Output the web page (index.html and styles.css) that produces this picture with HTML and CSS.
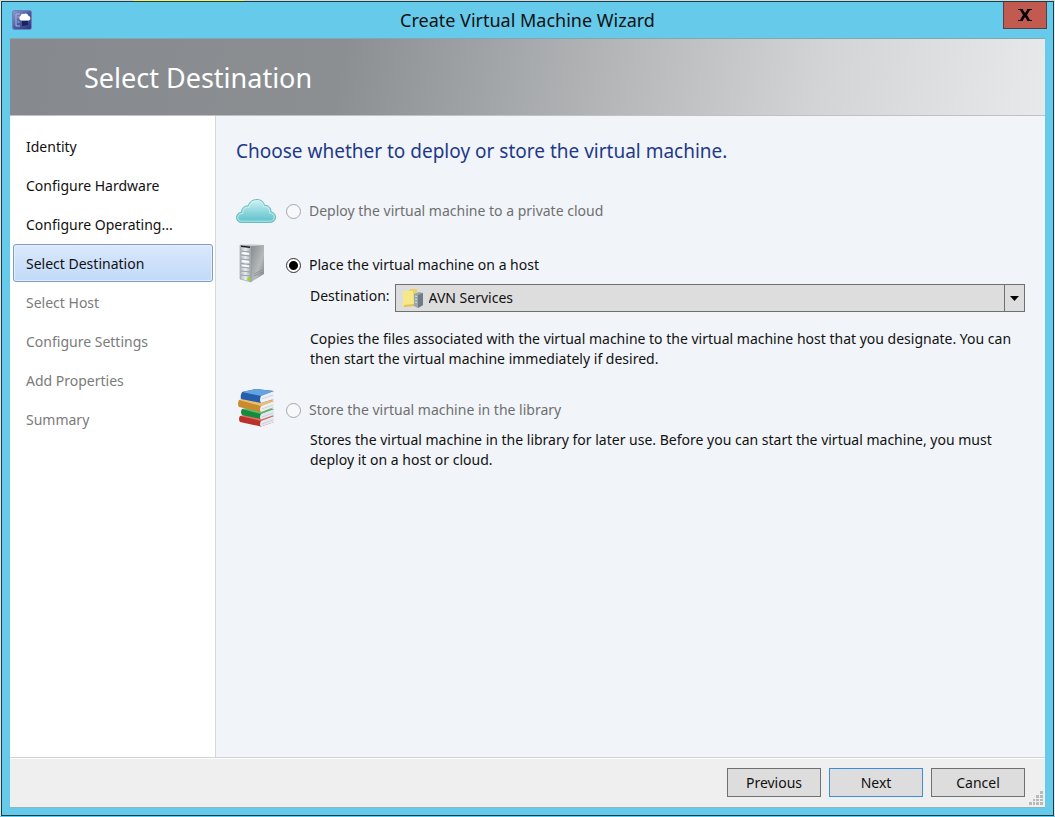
FILE: index.html
```html
<!DOCTYPE html>
<html lang="en">
<head>
<meta charset="utf-8">
<meta name="viewport" content="width=device-width, initial-scale=1">
<title>Create Virtual Machine Wizard</title>
<link rel="stylesheet" href="styles.css">
</head>
<body>
<div class="window">
  <header class="titlebar">
    <svg class="app-icon" viewBox="0 0 20 20" aria-hidden="true">
      <defs><linearGradient id="app" x1="0" y1="0" x2="1" y2="1"><stop offset="0" stop-color="#8f9fd0"/><stop offset=".5" stop-color="#4a5ca5"/><stop offset="1" stop-color="#27367f"/></linearGradient></defs>
      <rect x=".5" y=".5" width="19" height="19" rx="2" fill="url(#app)" stroke="#6f80b8"/>
      <path d="M4 4h4M4 4v12h4M5.500 7h2M5.500 12h2" stroke="#a9b6de" fill="none"/>
      <path d="M10 11v5l6-1v-4z" fill="#18245f"/>
      <path d="M9 10.500a2.500 2.500 0 0 1-.6-4.500A3 3 0 0 1 12 4a3 3 0 0 1 4.400 1.800 2.500 2.500 0 0 1 .6 4.700z" fill="#fff"/>
    </svg>
    <div class="title">Create Virtual Machine Wizard</div>
    <button class="close" type="button" aria-label="Close">
      <svg viewBox="0 0 14 12" aria-hidden="true"><path d="M0 0h5v1l2 3 2-3V0h5v1h-2L9 6l3 5h2v1H9v-1L7 8l-2 3v1H0v-1h2l3-5-3-5H0z"/></svg>
    </button>
  </header>
  <form class="client">
    <div class="banner"><h1>Select Destination</h1></div>
    <div class="body">
      <nav class="steps">
        <a class="step" href="#identity">Identity</a>
        <a class="step" href="#hardware">Configure Hardware</a>
        <a class="step" href="#os">Configure Operating...</a>
        <a class="step current" href="#destination" aria-current="step">Select Destination</a>
        <a class="step pending">Select Host</a>
        <a class="step pending">Configure Settings</a>
        <a class="step pending">Add Properties</a>
        <a class="step pending">Summary</a>
      </nav>
      <main class="content">
        <h2>Choose whether to deploy or store the virtual machine.</h2>

        <section class="option cloud">
          <svg class="picture" viewBox="0 0 40 40" aria-hidden="true">
            <defs><linearGradient id="cloud" x1="0" y1="0" x2="0" y2="1"><stop offset="0" stop-color="#d2f2f3"/><stop offset=".55" stop-color="#8bd6dc"/><stop offset="1" stop-color="#5dbfc9"/></linearGradient></defs>
            <path d="M6 31.500C2 31.500.500 29 .500 26.500c0-3 2-5 5-5.300C5.500 17 8.500 14.500 12 15 13.500 10.500 17 8.500 21 8.500c4 0 7 2.500 7.500 6 4-.5 6.500 2 6.500 6.500 3 .4 4.500 2.500 4.500 5 0 3.500-2.500 5.500-6 5.500z" fill="url(#cloud)" stroke="#6bb9c1"/>
            <path d="M6 30.200C3 30.200 1.800 28.500 1.800 26.500c0-2.500 2-4 5-4.200C6.800 18 9.500 16 13 16.500c1-4.500 4-6.700 8-6.700 3.500 0 6 2.500 6.300 6 4-.5 6.500 1.500 6.400 6.200 3 .2 4.500 2 4.500 4 0 3-2 4.200-4.700 4.200z" fill="none" stroke="#d2f2f3" opacity=".8"/>
          </svg>
          <label class="choice disabled"><input type="radio" name="target" disabled>Deploy the virtual machine to a private cloud</label>
        </section>

        <section class="option host">
          <svg class="picture" viewBox="0 0 40 40" aria-hidden="true">
            <defs>
              <linearGradient id="side" x1="0" y1="0" x2="1" y2="1"><stop offset="0" stop-color="#868b8e"/><stop offset=".6" stop-color="#b6babc"/><stop offset="1" stop-color="#777c80"/></linearGradient>
              <linearGradient id="front" x1="0" y1="0" x2="1" y2="0"><stop offset="0" stop-color="#b4babf"/><stop offset=".5" stop-color="#e7ebee"/><stop offset="1" stop-color="#a4acb2"/></linearGradient>
            </defs>
            <path d="M4 2l11-1 13 1-12 2z" fill="#d5d8da"/>
            <path d="M15 3l13-1v29L15 39z" fill="url(#side)"/>
            <path d="M4 2l11 1v36L4 36z" fill="url(#front)" stroke="#858c92" stroke-width=".5"/>
            <path d="M5 2.500l9 1v1.500l-9-1z" fill="#1c2022"/>
            <path d="M5 8l9 1M5 12l9 1M5 16l9 1M5 20.500l9 1M5 24l9 1M5 28l9 1M5 32l9 1" stroke="#87919a" stroke-width=".8"/>
            <path d="M6 10l7 1M6 18l7 1M6 22.500l7 1" stroke="#fff" stroke-width="1.500"/>
            <path d="M19 33v-4M21 32v-4M23 31v-4M25 30v-4" stroke="#777c80" stroke-dasharray="1 1"/>
            <circle cx="13" cy="36" r="1.700" fill="#9bd51d"/>
          </svg>
          <div class="details">
            <label class="choice"><input type="radio" name="target" checked>Place the virtual machine on a host</label>
            <div class="field">
              <label for="destination">Destination:</label>
              <div class="combo">
                <svg class="combo-icon" viewBox="0 0 22 20" aria-hidden="true">
                  <path d="M1 3h6l1-2h7v16H2z" fill="#e9d368"/><path d="M1 3h10l1 14-11 2z" fill="#f7e887"/><path d="M2 17l10-1v2L2 19z" fill="#ddc254"/>
                  <path d="M12 6l5-2 4 1v12l-5 3-4-2z" fill="#9aa6ad"/><path d="M16 7l5-2v12l-5 3z" fill="#6f7c85"/><path d="M13 8l2 .5M13 11l2 .5M13 14l2 .5" stroke="#d7dee2"/>
                </svg>
                <select id="destination"><option>AVN Services</option></select>
                <span class="arrow"><svg viewBox="0 0 9 5" aria-hidden="true"><path d="M0 0h9L4.500 5z"/></svg></span>
              </div>
            </div>
            <p>Copies the files associated with the virtual machine to the virtual machine host that you designate. You can then start the virtual machine immediately if desired.</p>
          </div>
        </section>

        <section class="option library">
          <svg class="picture" viewBox="0 0 40 40" aria-hidden="true">
            <path d="M4 28l22-3 12 3v6L25 38.500 4 34q-2-3 0-6z" fill="#b8322b"/><path d="M4 28l19-2 14 2-12 5z" fill="#df6c5c"/><path d="M25 33l13-5v6l-13 4.500q-2-2 0-5.500z" fill="#e6e9ef"/>
            <path d="M6 21l20-2 12 2v6l-13 4-19-4q-2-3 0-6z" fill="#168a3e"/><path d="M6 21l18-2 13 2-12 5z" fill="#5dbb71"/><path d="M25 26l13-5v6l-13 4.500q-2-2 0-5.500z" fill="#e4e8ee"/>
            <path d="M3 12l22-3 13 4v6l-13 5-22-5q-2-3 0-7z" fill="#ca8a2e"/><path d="M3 12l20-3 14 4-12 5z" fill="#f0be6a"/><path d="M25 18l13-5v6l-13 5q-2-2 0-6z" fill="#eceef4"/>
            <path d="M6 4l14-3 18 2v8l-13 4L5 11q-1-3 1-7z" fill="#245fae"/><path d="M6 4l14-3 17 2-12 5z" fill="#62a3e2"/><path d="M25 8l13-5v8l-13 4q-2-3 0-7z" fill="#eeeff7"/>
            <path d="M26 11l11-4M26 21l11-4M26 29l11-4M26 36l11-4" stroke="#b9bdca" stroke-width=".6"/>
          </svg>
          <div class="details">
            <label class="choice disabled"><input type="radio" name="target" disabled>Store the virtual machine in the library</label>
            <p>Stores the virtual machine in the library for later use. Before you can start the virtual machine, you must deploy it on a host or cloud.</p>
          </div>
        </section>
      </main>
    </div>
    <footer class="actions">
      <button type="button">Previous</button>
      <button type="button" class="primary">Next</button>
      <button type="button">Cancel</button>
      <svg class="grip" viewBox="0 0 14 14" aria-hidden="true"><path d="M11 0h3v3h-3zM11 4h3v3h-3zM7 4h3v3H7zM11 8h3v2h-3zM7 8h3v2H7zM4 8h2v2H4zM11 11h3v3h-3zM7 11h3v3H7zM4 11h2v3H4zM0 11h3v3H0z"/></svg>
    </footer>
  </form>
</div>
</body>
</html>
```
FILE: styles.css
```css
* { box-sizing: border-box; }

body {
  margin: 0;
  height: 100vh;
  padding: 1px;
  background:
    linear-gradient(to right, #c9dcdc 133px, #f0f56c 133px, #f0f56c 244px, #c9dcdc 244px) top / 100% 1px no-repeat,
    linear-gradient(#66caea, #66caea) bottom / 100% 1px no-repeat,
    #dfe9ec;
  font: 14px/20px "Segoe UI", "Noto Sans", sans-serif;
  color: #111;
}

h1, h2, p { margin: 0; font-weight: 400; }

.window {
  display: flex;
  flex-direction: column;
  height: 100%;
  padding: 0 8px 7px;
  border: 1px solid #1f3a48;
  background: #66caea;
}

.titlebar {
  display: grid;
  grid-template-columns: 42px 1fr 44px;
  height: 36px;
  flex: none;
  margin-right: -2px;
}

.app-icon { width: 20px; height: 20px; margin: 8px 2px; }
.title { font-size: 18px; line-height: 36px; text-align: center; }

.close {
  display: flex;
  align-items: center;
  justify-content: center;
  height: 27px;
  padding: 0;
  border: 1px solid #504048;
  border-top: 0;
  background: #c35a4f;
}
.close svg { width: 14px; height: 12px; }

.client { display: flex; flex-direction: column; flex: 1; min-height: 0; }

.banner {
  flex: none;
  height: 78px;
  padding: 0 74px;
  border-top: 1px solid #86a5b0;
  border-bottom: 1px solid #bfc1c4;
  background: linear-gradient(100deg, #868a8e 0%, #8b8f92 32%, #b4b6b8 58%, #d3d4d6 78%, #e8e9eb 100%);
}
.banner h1 { font-size: 27px; line-height: 78px; color: #fff; }

.body { display: flex; flex: 1; min-height: 0; background: #f1f5f9; }

.steps {
  display: flex;
  flex-direction: column;
  gap: 1px;
  flex: none;
  width: 206px;
  padding: 11px 2px 11px 3px;
  border-right: 1px solid #d5d8dc;
  background: #fff;
}
.step {
  height: 38px;
  padding: 0 12px;
  border: 1px solid transparent;
  border-radius: 3px;
  line-height: 37px;
  color: #111;
  text-decoration: none;
  white-space: nowrap;
}
.current {
  border-color: #7f9bc8;
  background: linear-gradient(#dae8fc, #c1daf9);
  box-shadow: inset 0 0 0 1px #e4effd;
}
.pending { color: #7b7b7b; }

.content { flex: 1; min-width: 0; padding: 20px 20px 0; }
.content h2 { font-size: 19px; line-height: 30px; color: #1f3a8a; }

.option { display: flex; gap: 10px; }
.picture { flex: none; width: 40px; height: 40px; }
.cloud { align-items: center; margin-top: 25px; }
.host { margin-top: 12px; }
.library { margin-top: 20px; }
.details { flex: 1; min-width: 0; padding-top: 12px; }

.choice { display: flex; align-items: center; gap: 8px; }
.disabled { color: #6f6f6f; }
.choice input {
  appearance: none;
  width: 15px;
  height: 15px;
  margin: 0;
  border: 1px solid #707070;
  border-radius: 50%;
  background: #fff;
}
.disabled input { border-color: #a4a8ac; background: #f6f8fa; }
.choice input:checked {
  border-color: #333;
  background: radial-gradient(circle, #000 4px, #fff 5px);
}

.field { display: flex; gap: 5px; margin-top: 9px; padding-left: 24px; }
.field label { flex: none; line-height: 24px; }
.combo { position: relative; flex: 1; height: 28px; }
.combo select {
  appearance: none;
  width: 100%;
  height: 100%;
  padding: 0 30px 0 33px;
  border: 1px solid #707070;
  border-radius: 0;
  background: #dddddd;
  font: inherit;
  color: #111;
}
.combo-icon { position: absolute; left: 7px; top: 4px; width: 22px; height: 20px; }
.arrow {
  position: absolute;
  top: 0;
  right: 0;
  display: flex;
  align-items: center;
  justify-content: center;
  width: 21px;
  height: 28px;
  border: 1px solid #707070;
  pointer-events: none;
}
.arrow svg { width: 9px; height: 5px; }

.details p { padding-left: 24px; }
.host p { margin-top: 17px; }
.library { margin-top: 19px; }
.library p { margin-top: 10px; }

.actions {
  position: relative;
  display: flex;
  justify-content: flex-end;
  gap: 8px;
  flex: none;
  height: 51px;
  padding: 10px 20px;
  border-top: 1px solid #d0d2d5;
  border-bottom: 1px solid #8fb4c2;
  background: #efefef;
  box-shadow: inset 0 1px #fff;
}
.actions button {
  width: 94px;
  height: 29px;
  padding: 0;
  border: 1px solid #707070;
  background: #dddddd;
  font: inherit;
  color: #111;
}
.actions .primary { border-color: #3c8ee0; }
.grip { position: absolute; right: 2px; bottom: 2px; width: 14px; height: 14px; fill: #b9b9b9; }
```
